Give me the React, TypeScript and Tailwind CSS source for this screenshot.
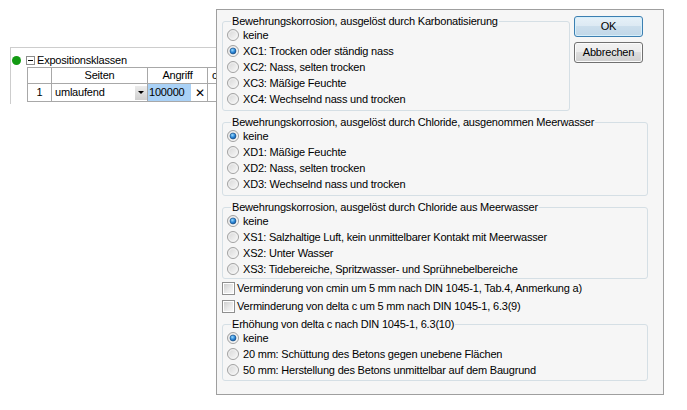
import React from 'react';

const Radio = ({ checked }: { checked?: boolean }) => (
  <svg className="shrink-0" width="12" height="12" viewBox="0 0 12 12">
    <defs>
      <linearGradient id="rOff" x1="0" y1="0" x2="1" y2="1">
        <stop offset="0%" stopColor="#d4d4d4" />
        <stop offset="100%" stopColor="#fbfbfb" />
      </linearGradient>
      <radialGradient id="rOn" cx="0.4" cy="0.35" r="0.7">
        <stop offset="0%" stopColor="#9bdcff" />
        <stop offset="55%" stopColor="#2d87d8" />
        <stop offset="100%" stopColor="#0d4f91" />
      </radialGradient>
    </defs>
    <circle cx="6" cy="6" r="5.5" fill="url(#rOff)" stroke="#a2a2a2" strokeWidth="1" />
    <circle cx="6" cy="6" r="4.2" fill="none" stroke="#f4f4f4" strokeWidth="0.8" />
    {checked && <circle cx="6" cy="6" r="3" fill="url(#rOn)" stroke="#174f86" strokeWidth="0.6" />}
  </svg>
);

const Check = () => (
  <span className="shrink-0 w-[13px] h-[13px] border border-[#8f8f8f] bg-white p-[1px]">
    <span className="block w-full h-full bg-[linear-gradient(135deg,#cfcfcf_0%,#e9e9e9_55%,#f7f7f7_100%)]" />
  </span>
);

const RadioRow = ({ label, checked }: { label: string; checked?: boolean }) => (
  <div className="flex items-center h-[16px]">
    <Radio checked={checked} />
    <span className="ml-[4px] whitespace-nowrap">{label}</span>
  </div>
);

const Group = ({
  title,
  items,
  selected,
  className,
}: {
  title: string;
  items: string[];
  selected: number;
  className: string;
}) => (
  <fieldset className={`border border-[#d5dfe5] rounded-[3px] pl-[4px] ${className}`}>
    <legend className="ml-[4px] px-[1px] leading-[12px] whitespace-nowrap">{title}</legend>
    {items.map((it, i) => (
      <RadioRow key={it} label={it} checked={i === selected} />
    ))}
  </fieldset>
);

export default function App() {
  return (
    <div className="w-[687px] h-[410px] bg-white flex items-start overflow-hidden text-black text-[11px] tracking-[-0.2px] font-['Liberation_Sans',Arial,sans-serif]">
      {/* background grid */}
      <div className="w-[216px] h-full shrink-0 overflow-hidden">
        <div className="ml-[10px] mt-[47px] h-[57px] border-l border-t border-[#cdcdcd]">
          <div className="flex items-center h-[12px] mt-[6px]">
            <span className="ml-[1px] w-[9px] h-[9px] rounded-full bg-[#129a12]" />
            <span className="ml-[5px] w-[9px] h-[9px] border border-[#8c8c8c] bg-white flex items-center justify-center">
              <span className="w-[5px] h-[1px] bg-black" />
            </span>
            <span className="ml-[2px] leading-[12px]">Expositionsklassen</span>
          </div>
          <div className="ml-[16px] mt-[1px] w-[240px] border-l border-t border-[#a8a8a8]">
            <div className="flex h-[16px]">
              <div className="w-[24px] border-r border-b border-[#a8a8a8]" />
              <div className="w-[96px] border-r border-b border-[#a8a8a8] flex items-center justify-center">Seiten</div>
              <div className="w-[60px] border-r border-b border-[#a8a8a8] flex items-center justify-center">Angriff</div>
              <div className="w-[40px] border-r border-b border-[#a8a8a8] flex items-center pl-[4px]">cnom</div>
            </div>
            <div className="flex h-[18px]">
              <div className="w-[24px] border-r border-b border-[#a8a8a8] flex items-center justify-center">1</div>
              <div className="w-[96px] border-r border-b border-[#a8a8a8] flex items-center pl-[3px]">
                <span>umlaufend</span>
                <span className="ml-auto w-[12px] h-[14px] bg-[linear-gradient(#ececec,#cfcfcf)] flex items-center justify-center">
                  <span className="w-0 h-0 border-l-[3px] border-r-[3px] border-t-[3px] border-l-transparent border-r-transparent border-t-black" />
                </span>
              </div>
              <div className="w-[60px] border-r border-b border-[#a8a8a8] flex items-stretch">
                <span className="w-[43px] bg-[#a9d1f6] flex items-center pl-[1px]">100000</span>
                <span className="ml-[4px] flex items-center text-[12px]">✕</span>
              </div>
              <div className="w-[40px] border-r border-b border-[#a8a8a8]" />
            </div>
          </div>
        </div>
      </div>

      {/* dialog */}
      <div className="mt-[9px] w-[448px] h-[386px] shrink-0 border border-[#9f9f9f] bg-[#f6f6f6] pt-[5px] pl-[5px]">
        <div className="flex items-start">
          <Group
            className="w-[348px] pb-[3px]"
            title="Bewehrungskorrosion, ausgelöst durch Karbonatisierung"
            selected={1}
            items={[
              'keine',
              'XC1: Trocken oder ständig nass',
              'XC2: Nass, selten trocken',
              'XC3: Mäßige Feuchte',
              'XC4: Wechselnd nass und trocken',
            ]}
          />
          <div className="ml-[4px] mt-[1px] flex flex-col gap-[5px]">
            <button className="w-[69px] h-[21px] rounded-[3px] border border-[#3c7fb1] shadow-[inset_0_0_0_1px_#d6effb] bg-[linear-gradient(#e6f1f8_0%,#dce9f3_50%,#cbdeec_50%,#c1d7e8_100%)]">
              OK
            </button>
            <button className="w-[69px] h-[21px] rounded-[3px] border border-[#707070] shadow-[inset_0_0_0_1px_#fbfbfb] bg-[linear-gradient(#f2f2f2_0%,#ebebeb_50%,#dddddd_50%,#cfcfcf_100%)]">
              Abbrechen
            </button>
          </div>
        </div>
        <Group
          className="w-[426px] mt-[5px] pb-[3px]"
          title="Bewehrungskorrosion, ausgelöst durch Chloride, ausgenommen Meerwasser"
          selected={0}
          items={['keine', 'XD1: Mäßige Feuchte', 'XD2: Nass, selten trocken', 'XD3: Wechselnd nass und trocken']}
        />
        <Group
          className="w-[426px] mt-[5px] pb-[1px]"
          title="Bewehrungskorrosion, ausgelöst durch Chloride aus Meerwasser"
          selected={0}
          items={[
            'keine',
            'XS1: Salzhaltige Luft, kein unmittelbarer Kontakt mit Meerwasser',
            'XS2: Unter Wasser',
            'XS3: Tidebereiche, Spritzwasser- und Sprühnebelbereiche',
          ]}
        />
        <div className="flex items-center h-[18px]">
          <Check />
          <span className="ml-[2px]">Verminderung von cmin um 5 mm nach DIN 1045-1, Tab.4, Anmerkung a)</span>
        </div>
        <div className="flex items-center h-[18px]">
          <Check />
          <span className="ml-[2px]">Verminderung von delta c um 5 mm nach DIN 1045-1, 6.3(9)</span>
        </div>
        <Group
          className="w-[426px] mt-[3px] pb-[2px]"
          title="Erhöhung von delta c nach DIN 1045-1, 6.3(10)"
          selected={0}
          items={[
            'keine',
            '20 mm: Schüttung des Betons gegen unebene Flächen',
            '50 mm: Herstellung des Betons unmittelbar auf dem Baugrund',
          ]}
        />
      </div>
    </div>
  );
}
